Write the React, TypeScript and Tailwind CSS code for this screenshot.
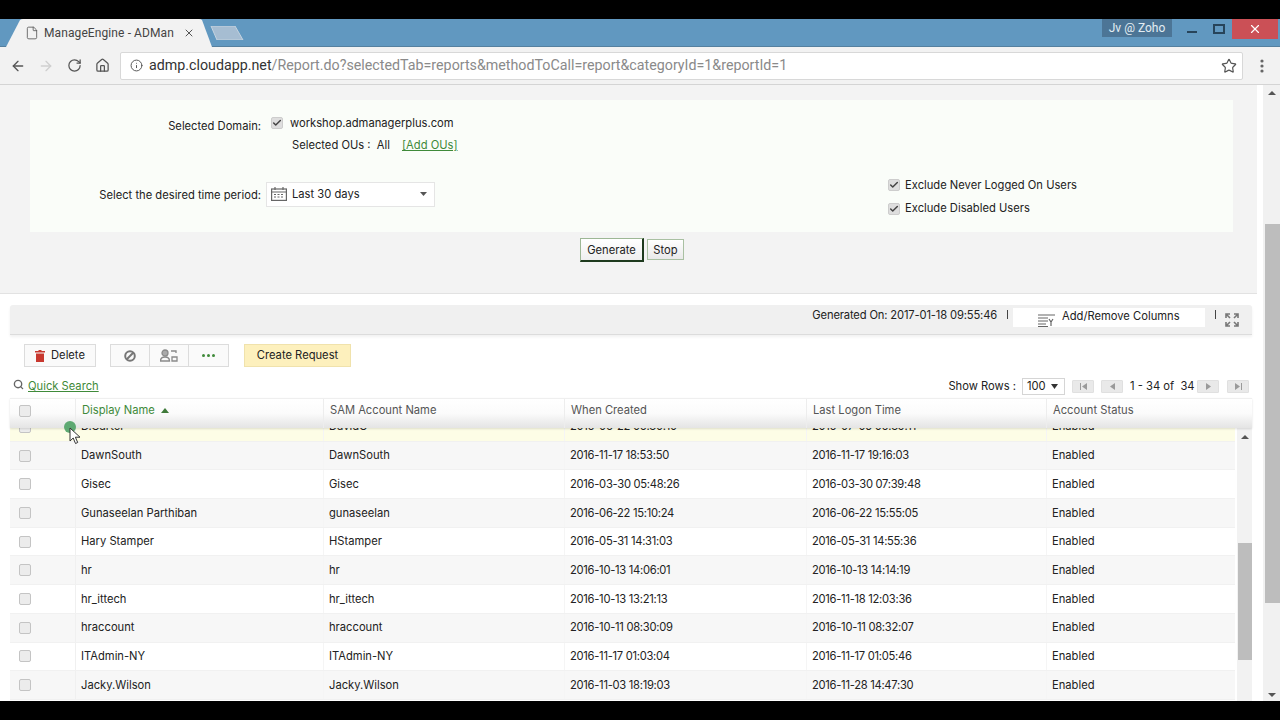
import React from "react";
import { ArrowLeft, ArrowRight, RotateCw, Home, Info, Star, File, X, Search, Check } from "lucide-react";

const rows = [
  ["D.Carter", "DavidC", "2016-06-22 06:30:10", "2016-07-05 06:39:11", "Enabled"],
  ["DawnSouth", "DawnSouth", "2016-11-17 18:53:50", "2016-11-17 19:16:03", "Enabled"],
  ["Gisec", "Gisec", "2016-03-30 05:48:26", "2016-03-30 07:39:48", "Enabled"],
  ["Gunaseelan Parthiban", "gunaseelan", "2016-06-22 15:10:24", "2016-06-22 15:55:05", "Enabled"],
  ["Hary Stamper", "HStamper", "2016-05-31 14:31:03", "2016-05-31 14:55:36", "Enabled"],
  ["hr", "hr", "2016-10-13 14:06:01", "2016-10-13 14:14:19", "Enabled"],
  ["hr_ittech", "hr_ittech", "2016-10-13 13:21:13", "2016-11-18 12:03:36", "Enabled"],
  ["hraccount", "hraccount", "2016-10-11 08:30:09", "2016-10-11 08:32:07", "Enabled"],
  ["ITAdmin-NY", "ITAdmin-NY", "2016-11-17 01:03:04", "2016-11-17 01:05:46", "Enabled"],
  ["Jacky.Wilson", "Jacky.Wilson", "2016-11-03 18:19:03", "2016-11-28 14:47:30", "Enabled"],
];

function Box() {
  return <span className="block w-[12px] h-[12px] rounded-[2px] border border-[#c4c4c4] bg-[#ececec]" />;
}

function Checked() {
  return (
    <span className="flex w-[12px] h-[12px] items-center justify-center rounded-[2px] bg-[#dedede] border border-[#cdcdcd]">
      <Check size={10} strokeWidth={3.5} className="text-[#444]" />
    </span>
  );
}

function Pager({ d }: { d: string }) {
  return (
    <span className="flex w-[22px] h-[13px] items-center justify-center rounded-[1px] border border-[#e0e0e0] bg-[#e9e9e9]">
      <svg width="9" height="7" viewBox="0 0 9 7"><path d={d} fill="#9a9a9a" /></svg>
    </span>
  );
}

export default function App() {
  return (
    <div className="h-[720px] w-[1280px] overflow-hidden bg-black flex flex-col font-['Inter','Liberation_Sans',sans-serif] text-[11.2px] text-[#222] relative">
      <div className="h-[19px] shrink-0" />

      {/* tab strip */}
      <div className="h-[28px] shrink-0 bg-[#6198c0] relative flex border-b border-[#55809f]">
        <svg className="absolute left-[6px] top-0" width="206" height="28" viewBox="0 0 206 28">
          <path d="M0 28 L14 1 Q15 0 17 0 L193 0 Q195 0 196 1 L206 28 Z" fill="#f2f2f2" />
        </svg>
        <svg className="absolute left-[210px] top-[7px]" width="34" height="14" viewBox="0 0 34 14">
          <path d="M1 0 L25 0 L33 14 L7 14 Z" fill="#a6bdd2" stroke="#c5d3df" />
        </svg>
        <div className="relative flex items-center h-[27px] pl-[25px]">
          <File size={14} strokeWidth={1.4} className="text-[#555]" />
          <span className="ml-[5px] w-[130px] overflow-hidden whitespace-nowrap text-[12px] font-['Roboto','Liberation_Sans',sans-serif] text-[#444] tracking-[0.1px]">ManageEngine - ADMan</span>
          <X size={12} strokeWidth={2} className="ml-[9px] text-[#555]" />
        </div>
        <div className="ml-auto relative flex h-[20px] items-start">
          <span className="w-[70px] h-[18px] bg-[#4c7596] text-[#e3edf3] text-[12px] flex items-center justify-center font-['Roboto','Liberation_Sans',sans-serif]">Jv @ Zoho</span>
          <span className="ml-[15px] mt-[12px] w-[10px] h-[2px] bg-[#27445a]" />
          <span className="ml-[16px] mt-[5px] w-[12px] h-[10px] border-2 border-[#27445a]" />
          <span className="ml-[7px] w-[46px] h-[20px] bg-[#cb5056] flex items-center justify-center"><X size={14} strokeWidth={2} className="text-white" /></span>
          <span className="w-[2px]" />
        </div>
      </div>

      {/* toolbar */}
      <div className="h-[38px] shrink-0 bg-[#f2f2f2] border-b border-[#d4d4d4] flex items-center pl-[10px] pr-[16px]">
        <ArrowLeft size={16} strokeWidth={2} className="text-[#555]" />
        <ArrowRight size={16} strokeWidth={2} className="ml-[12px] text-[#cfcfcf]" />
        <RotateCw size={15} strokeWidth={2} className="ml-[13px] text-[#555]" />
        <Home size={15} strokeWidth={2} className="ml-[13px] text-[#555]" />
        <div className="ml-[10px] h-[28px] w-[1123px] flex items-center bg-white rounded-[2px] border border-[#d8d8d8] pl-[9px] pr-[5px] font-['Roboto','Liberation_Sans',sans-serif] text-[14.25px]">
          <Info size={13} strokeWidth={1.8} className="text-[#555]" />
          <span className="ml-[6px] text-[#333]">admp.cloudapp.net</span>
          <span className="text-[#8a8a8a]">/Report.do?selectedTab=reports&amp;methodToCall=report&amp;categoryId=1&amp;reportId=1</span>
          <Star size={16} strokeWidth={1.8} className="ml-auto text-[#555]" />
        </div>
        <svg className="ml-[17px]" width="4" height="14" viewBox="0 0 4 14"><circle cx="2" cy="2" r="1.6" fill="#666" /><circle cx="2" cy="7" r="1.6" fill="#666" /><circle cx="2" cy="12" r="1.6" fill="#666" /></svg>
      </div>

      {/* page */}
      <div className="h-[616px] shrink-0 bg-white flex overflow-hidden">
        <div className="w-[1257px] shrink-0 flex flex-col">
          {/* filter panel */}
          <div className="h-[209px] shrink-0 bg-[#f3f3f3] border-b border-[#e2e2e2] pl-[30px] pr-[24px] pt-[15px] flex flex-col">
            <div className="h-[132px] shrink-0 bg-[#fafdf9] flex relative">
              <div className="w-[231px] flex flex-col items-end">
                <span className="mt-[18px]">Selected Domain:</span>
                <span className="mt-[52px]">Select the desired time period:</span>
              </div>
              <div className="flex flex-col ml-[10px]">
                <div className="flex items-center mt-[16px] h-[14px]"><Checked /><span className="ml-[7px]">workshop.admanagerplus.com</span></div>
                <div className="flex items-center mt-[7px] ml-[21px]">
                  <span>Selected OUs :&nbsp; All</span>
                  <span className="ml-[12px] text-[#3f8a3a] underline">[Add OUs]</span>
                </div>
                <div className="mt-[28px] -ml-[5px] w-[169px] h-[25px] bg-white border border-[#e5e5e5] flex items-center pl-[4px] pr-[7px]">
                  <svg width="16" height="14" viewBox="0 0 16 14" fill="none" stroke="#666" strokeWidth="1.2"><rect x="0.6" y="2" width="14.800" height="11.400" /><path d="M0.600 5h14.800M4 0v3M12 0v3" /><path d="M3 7.500h10M3 10h10" strokeDasharray="2 1.500" /></svg>
                  <span className="ml-[5px]">Last 30 days</span>
                  <svg className="ml-auto" width="7" height="4" viewBox="0 0 7 4"><path d="M0 0h7L3.5 4z" fill="#555" /></svg>
                </div>
              </div>
              <div className="ml-auto mr-[156px] mt-[78px] flex flex-col gap-[9.5px]">
                <div className="flex items-center h-[14px]"><Checked /><span className="ml-[5px]">Exclude Never Logged On Users</span></div>
                <div className="flex items-center h-[14px]"><Checked /><span className="ml-[5px]">Exclude Disabled Users</span></div>
              </div>
            </div>
            <div className="flex justify-center items-start gap-[3px] mt-[6px] pl-[1px]">
              <button className="w-[64px] h-[24px] pt-[1px] bg-gradient-to-b from-white to-[#efefef] border border-[#9db795] border-r-2 border-b-2 border-r-[#1e3a1e] border-b-[#1e3a1e]">Generate</button>
              <button className="w-[37px] h-[21px] mt-[1px] pt-[1px] bg-gradient-to-b from-white to-[#e9e9e9] border border-[#a9c0a2]">Stop</button>
            </div>
          </div>

          <div className="h-[11px] shrink-0" />

          {/* report */}
          <div className="ml-[10px] flex-1 flex flex-col min-h-0">
            <div className="h-[30px] w-[1242px] shrink-0 bg-[#f0f0f0] rounded-t-[3px] border-b border-[#dcdcdc] shadow-[0_2px_3px_rgba(0,0,0,0.06)] flex justify-end pr-[13px]">
              <span className="mt-[2px] tracking-[-0.15px]">Generated On: 2017-01-18 09:55:46</span>
              <span className="ml-[10px] mt-[5px] w-[1px] h-[9px] bg-[#444]" />
              <div className="ml-[5px] mt-[3px] w-[192px] h-[19px] bg-white flex items-start pl-[25px]">
                <svg className="mt-[5px]" width="17" height="14" viewBox="0 0 17 14" fill="none" stroke="#666" strokeWidth="1.2"><path d="M0 2h17M0 5h10M0 8h10M0 11h8M0 13.5h10M11 6l2 3 2-3M13 9v4" /></svg>
                <span className="ml-[7px]">Add/Remove Columns</span>
              </div>
              <span className="ml-[10px] mt-[5px] w-[1px] h-[9px] bg-[#444]" />
              <svg className="ml-[9px] mt-[8px]" width="14" height="14" viewBox="0 0 14 14" fill="none" stroke="#777" strokeWidth="1.6"><path d="M1 5V1h4M1 1l4 4M13 5V1H9M13 1L9 5M1 9v4h4M1 13l4-4M13 9v4H9M13 13L9 9" /></svg>
            </div>

            {/* action bar */}
            <div className="h-[32px] shrink-0 flex items-end pl-[14px]">
              <button className="w-[72px] h-[23px] flex items-center justify-center gap-[6px] border border-[#dcdcdc] bg-[#fafafa]">
                <svg width="10" height="12" viewBox="0 0 10 12"><path d="M3.500 0h3v1H10v1.500H0V1h3.500zM1 3.500h8V12H1z" fill="#c8382f" /></svg>Delete
              </button>
              <div className="ml-[14px] w-[119px] h-[23px] grid grid-cols-3 border border-[#dcdcdc] bg-[#fafafa] divide-x divide-[#dcdcdc]">
                <span className="flex items-center justify-center">
                  <svg width="12" height="12" viewBox="0 0 12 12" fill="none" stroke="#777" strokeWidth="2"><circle cx="6" cy="6" r="4.800" /><path d="M2.800 9.200l6.400-6.400" /></svg>
                </span>
                <span className="flex items-center justify-center">
                  <svg width="18" height="13" viewBox="0 0 18 13" fill="none" stroke="#8a8a8a" strokeWidth="1.3"><circle cx="5" cy="4" r="3" fill="#aaa" /><path d="M0.5 12c0-3 2-4 4.500-4s4.500 1 4.500 4zM11 2h5v2M12 8h5v4h-5z" /></svg>
                </span>
                <span className="flex items-center justify-center gap-[2px]">
                  <i className="block w-[3px] h-[3px] rounded-full bg-[#3f8a3a]" /><i className="block w-[3px] h-[3px] rounded-full bg-[#3f8a3a]" /><i className="block w-[3px] h-[3px] rounded-full bg-[#3f8a3a]" />
                </span>
              </div>
              <button className="ml-[15px] w-[107px] h-[23px] bg-[#fdf0bd] border border-[#f0e2ac]">Create Request</button>
            </div>

            {/* search and pager */}
            <div className="h-[31px] w-[1242px] shrink-0 flex items-center pt-[8px] pl-[3px] pr-[3px]">
              <Search size={11} strokeWidth={3} className="text-[#666] -mt-[4px]" />
              <span className="ml-[4px] text-[#3f8a3a] underline">Quick Search</span>
              <span className="ml-auto">Show Rows :</span>
              <span className="ml-[6px] w-[43px] h-[17px] border border-[#d5d5d5] flex items-center pl-[4px] gap-[5px]">100
                <svg width="7" height="5" viewBox="0 0 7 5"><path d="M0 0h7L3.500 5z" fill="#333" /></svg>
              </span>
              <span className="ml-[7px]"><Pager d="M1 0h1v7H1zM8 0v7L3 3.500z" /></span>
              <span className="ml-[7px]"><Pager d="M7 0v7L2 3.500z" /></span>
              <span className="ml-[7px] w-[67px] whitespace-nowrap">1 - 34 of&nbsp; 34</span>
              <span><Pager d="M2 0v7l5-3.500z" /></span>
              <span className="ml-[8px]"><Pager d="M1 0v7l5-3.500zM7 0h1v7H7z" /></span>
            </div>

            {/* header */}
            <div className="grid grid-cols-[66px_248px_241px_242px_240px_205px] h-[30px] w-[1242px] shrink-0 bg-gradient-to-b from-white via-[#fbfbfb] to-[#e4e4e4] border-t border-[#efefef] text-[#555] relative z-10 shadow-[0_1px_2px_rgba(0,0,0,0.12)]">
              <div className="flex items-center pb-[6px] pl-[9px] border-r border-[#ededed]"><Box /></div>
              <div className="flex items-center pb-[6px] pl-[6px] text-[#3f8a3a] border-r border-[#ededed]">Display Name
                <svg className="ml-[6px]" width="8" height="5" viewBox="0 0 8 5"><path d="M0 5h8L4 0z" fill="#3f7a3a" /></svg>
              </div>
              <div className="flex items-center pb-[6px] pl-[6px] border-r border-[#ededed]">SAM Account Name</div>
              <div className="flex items-center pb-[6px] pl-[6px] border-r border-[#ededed]">When Created</div>
              <div className="flex items-center pb-[6px] pl-[6px] border-r border-[#ededed]">Last Logon Time</div>
              <div className="flex items-center pb-[6px] pl-[6px]">Account Status</div>
            </div>

            {/* rows */}
            <div className="flex-1 min-h-0 flex overflow-hidden relative">
              <div className="w-[1225px] shrink-0 overflow-hidden">
                <div className="-mt-[15px]">
                  {rows.map((r, i) => (
                    <div
                      key={r[0]}
                      className={
                        "grid grid-cols-[66px_248px_241px_242px_240px_188px] h-[28.7px] border-b border-[#f1f1f1] " +
                        (i === 0 ? "bg-[#fdfde6]" : i % 2 === 1 ? "bg-[#f7f7f7]" : "bg-white")
                      }
                    >
                      <span className="pl-[9px] flex items-center border-r border-[#f0f0f0]"><Box /></span>
                      <span className="pl-[5px] flex items-center border-r border-[#f5f5f5]">{r[0]}</span>
                      <span className="pl-[5px] flex items-center border-r border-[#f5f5f5]">{r[1]}</span>
                      <span className="pl-[5px] flex items-center border-r border-[#f5f5f5] tracking-[-0.28px]">{r[2]}</span>
                      <span className="pl-[5px] flex items-center border-r border-[#f5f5f5] tracking-[-0.28px]">{r[3]}</span>
                      <span className="pl-[5px] flex items-center">{r[4]}</span>
                    </div>
                  ))}
                </div>
              </div>
              <div className="ml-[2px] w-[15px] shrink-0 bg-[#f2f2f2] flex flex-col items-center pt-[7px]">
                <svg width="8" height="4" viewBox="0 0 8 4"><path d="M0 4h8L4 0z" fill="#555" /></svg>
                <div className="mt-[104px] w-[14px] h-[117px] bg-[#bdbdbd]" />
              </div>
            </div>
          </div>
        </div>

        {/* page scrollbar */}
        <div className="ml-[6px] w-[17px] shrink-0 bg-[#f1f1f1] flex flex-col items-center pt-[6px] relative">
          <svg width="8" height="4" viewBox="0 0 8 4"><path d="M0 4h8L4 0z" fill="#555" /></svg>
          <div className="mt-[129px] w-[15px] h-[379px] bg-[#bdbdbd] ml-[2px]" />
          <svg className="mt-[90px]" width="8" height="4" viewBox="0 0 8 4"><path d="M0 0h8L4 4z" fill="#555" /></svg>
        </div>
      </div>

      <div className="flex-1" />

      {/* recorded pointer */}
      <span className="absolute z-20 left-[64px] top-[421px] w-[12px] h-[12px] rounded-full bg-[#5ea972]" />
      <svg className="absolute z-20 left-[69px] top-[427px]" width="13" height="18" viewBox="0 0 13 18">
        <path d="M1 1v13l3.200-3 2.300 5.500 2.200-1-2.300-5.300H11z" fill="#fff" stroke="#333" strokeWidth="1" />
      </svg>
    </div>
  );
}
